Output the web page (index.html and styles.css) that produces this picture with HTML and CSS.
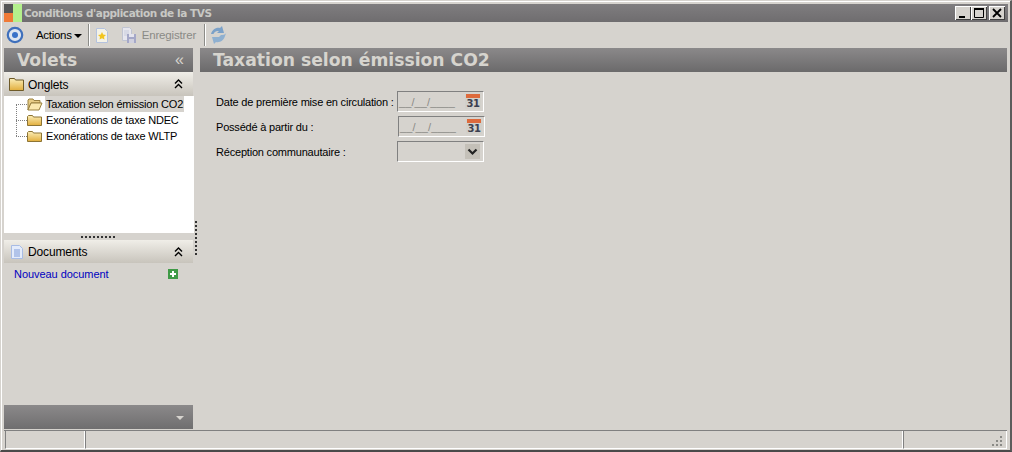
FILE: index.html
```html
<!DOCTYPE html>
<html lang="fr">
<head>
<meta charset="utf-8">
<title>Conditions d'application de la TVS</title>
<link rel="stylesheet" href="styles.css">
</head>
<body>
<svg class="defs" width="0" height="0">
  <defs>
    <linearGradient id="fold" x1="0" y1="0" x2="0" y2="1"><stop offset="0" stop-color="#fbeeb8"/><stop offset="1" stop-color="#e2ae3c"/></linearGradient>
  </defs>
</svg>
<div class="window">
  <header class="titlebar">
    <svg class="appicon" width="18" height="18" viewBox="0 0 18 18"><rect width="9" height="9" fill="#555"/><rect y="9" width="9" height="9" fill="#f07a36"/><rect x="9" width="9" height="18" fill="#b4f08c"/></svg>
    <span class="titletext">Conditions d'application de la TVS</span>
    <div class="winbtns">
      <span class="winbtn"><svg width="16" height="14" viewBox="0 0 16 14"><rect x="4" y="10" width="6" height="2" fill="#000"/></svg></span>
      <span class="winbtn"><svg width="16" height="14" viewBox="0 0 16 14"><path d="M3.500 2.500h9v9h-9z" fill="none" stroke="#000"/><rect x="3" y="2" width="10" height="2" fill="#000"/></svg></span>
      <span class="winbtn winbtn-close"><svg width="16" height="14" viewBox="0 0 16 14"><path d="M4 3l8 8M12 3l-8 8" stroke="#000" stroke-width="1.800"/></svg></span>
    </div>
  </header>
  <nav class="toolbar">
    <svg class="tb-orb" width="18" height="18" viewBox="0 0 18 18"><circle cx="9" cy="9" r="7.200" fill="#dfe6f0" stroke="#3f70bc" stroke-width="2.200"/><circle cx="9" cy="9" r="3" fill="#3a72c8"/></svg>
    <span class="tb-actions">Actions<i class="caret"></i></span>
    <span class="tb-sep"></span>
    <svg class="tb-new" width="16" height="18" viewBox="0 0 16 18"><path d="M2.500 2.500h8l3 3v11h-11z" fill="#f4f2e6" stroke="#b4c2de"/><path d="M8 6l1.200 2.600 2.800.3-2 1.900.5 2.800L8 12.200l-2.500 1.400.5-2.800-2-1.900 2.800-.3z" fill="#f2c51e"/></svg>
    <svg class="tb-save" width="18" height="18" viewBox="0 0 18 18"><path d="M2.500 1.500h7l2 2v11h-9z" fill="#e6e6ee" stroke="#c0c4d2"/><path d="M4 5h5M4 7h5M4 9h5" stroke="#c8ccdc"/><rect x="7" y="8" width="9" height="9" fill="#a5a8c8"/><rect x="9" y="8" width="5" height="3" fill="#e4e4ee"/><rect x="9" y="13" width="5" height="4" fill="#d0d0de"/></svg>
    <span class="tb-save-label">Enregistrer</span>
    <span class="tb-sep tb-sep2"></span>
    <svg class="tb-refresh" width="18" height="20" viewBox="0 0 18 20"><path d="M2 9c1-4 5-7 9-6l2-2 2 7-7 0 2-2c-3-.5-5 1-5.500 3z" fill="#7ba1c8"/><path d="M16 11c-1 4-5 7-9 6l-2 2-2-7 7 0 2-2c3 .5 5-1 5.500-3z" fill="#8fb0d0"/></svg>
  </nav>
  <div class="body">
    <aside class="sidebar">
      <div class="sb-head"><span>Volets</span><span class="sb-collapse">«</span></div>
      <div class="section-head">
        <svg width="16" height="14" viewBox="0 0 16 14"><path d="M.5 1.500h5l1 1.500h8v10.500H.5z" fill="url(#fold)" stroke="#6e5a28"/></svg>
        <span class="section-title">Onglets</span>
        <svg class="chev" width="9" height="10" viewBox="0 0 9 10"><path d="M1 4.500l3.500-3.500 3.500 3.500M1 9l3.500-3.500L8 9" fill="none" stroke="#000" stroke-width="1.400"/></svg>
      </div>
      <ul class="tree">
        <li class="tree-item">
          <svg class="folder" width="16" height="13" viewBox="0 0 16 13"><path d="M1 2l1-1h4l1 1.500h6V5H4L1 12z" fill="#e8cd85" stroke="#9a8140"/><path d="M1 12l3-7h11l-3 7z" fill="#fbe9ae" stroke="#9a8140"/></svg>
          <span class="tree-label tree-label-active">Taxation selon émission CO2</span>
        </li>
        <li class="tree-item">
          <svg class="folder" width="16" height="13" viewBox="0 0 16 13"><path d="M.5 2.500l1-1h4l1 1.500h8v8.500h-14z" fill="url(#fold)" stroke="#8d7434"/></svg>
          <span class="tree-label">Exonérations de taxe NDEC</span>
        </li>
        <li class="tree-item">
          <svg class="folder" width="16" height="13" viewBox="0 0 16 13"><path d="M.5 2.500l1-1h4l1 1.500h8v8.500h-14z" fill="url(#fold)" stroke="#8d7434"/></svg>
          <span class="tree-label">Exonérations de taxe WLTP</span>
        </li>
      </ul>
      <div class="grip"><span class="grip-dots"></span></div>
      <div class="section-head section-head-docs">
        <svg width="14" height="16" viewBox="0 0 14 16"><path d="M1.500 1.500h8l3 3v10h-11z" fill="#e4ecfb" stroke="#a8bce4"/><path d="M4 6h6M4 8h6M4 10h6M4 12h6" stroke="#7f9bd8"/></svg>
        <span class="section-title">Documents</span>
        <svg class="chev" width="9" height="10" viewBox="0 0 9 10"><path d="M1 4.500l3.500-3.500 3.500 3.500M1 9l3.500-3.500L8 9" fill="none" stroke="#000" stroke-width="1.400"/></svg>
      </div>
      <div class="docs">
        <a class="doc-link">Nouveau document</a>
        <svg width="10" height="10" viewBox="0 0 10 10"><rect width="10" height="10" fill="#3f9a46"/><path d="M5 2v6M2 5h6" stroke="#fff" stroke-width="2"/></svg>
      </div>
      <div class="sb-foot"><i class="foot-caret"></i></div>
    </aside>
    <div class="vsplit"><span class="vdots"></span></div>
    <main class="main">
      <h1 class="main-head">Taxation selon émission CO2</h1>
      <form class="form">
        <div class="row">
          <label class="row-label">Date de première mise en circulation :</label>
          <div class="field">
            <span class="mask">__/__/____</span>
            <span class="cal"><span class="cal-top"></span><b>31</b></span>
          </div>
        </div>
        <div class="row row-shift">
          <label class="row-label">Possédé à partir du :</label>
          <div class="field">
            <span class="mask">__/__/____</span>
            <span class="cal"><span class="cal-top"></span><b>31</b></span>
          </div>
        </div>
        <div class="row">
          <label class="row-label">Réception communautaire :</label>
          <div class="field">
            <span class="mask"></span>
            <span class="dropbtn"><svg width="11" height="8" viewBox="0 0 11 8"><path d="M1.500 1.500l4 4 4-4" fill="none" stroke="#222" stroke-width="2.200"/></svg></span>
          </div>
        </div>
      </form>
    </main>
  </div>
  <footer class="status">
    <span class="st st1"></span>
    <span class="st st2"></span>
    <span class="st st3"><svg class="resize" width="11" height="11" viewBox="0 0 11 11"><path d="M8 0h2v2H8zM8 4h2v2H8zM4 4h2v2H4zM8 8h2v2H8zM4 8h2v2H4zM0 8h2v2H0z" fill="#8a8a86"/></svg></span>
  </footer>
</div>
</body>
</html>
```
FILE: styles.css
```css
* { box-sizing: border-box; }
html, body { margin: 0; height: 100%; }
body {
  background: #d6d3ce;
  font-family: "Liberation Sans", Arial, sans-serif;
  font-size: 11px;
  color: #000;
  overflow: hidden;
}
.defs { position: absolute; }
.window {
  width: 1012px;
  height: 452px;
  display: flex;
  flex-direction: column;
  padding: 3px 3px 0 3px;
  background: #d6d3ce;
  border-top: 1px solid #d6d3ce;
  border-left: 1px solid #d6d3ce;
  border-right: 2px solid #5c5c5c;
  border-bottom: 2px solid #4a4a4a;
  box-shadow: inset 1px 1px 0 #fff;
}
.titlebar {
  height: 18px;
  flex: none;
  display: flex;
  align-items: center;
  margin-right: -1px;
  background: linear-gradient(#7f7d7f, #6f6d6f);
}
.appicon { flex: none; }
.titletext {
  margin-left: 2px;
  font-family: "DejaVu Sans", sans-serif;
  font-size: 10.500px;
  font-weight: 700;
  color: #c8c8c4;
  letter-spacing: -.44px;
  white-space: nowrap;
}
.winbtns { margin-left: auto; display: flex; padding-right: 3px; }
.winbtn {
  width: 16px;
  height: 14px;
  background: #d6d3ce;
  box-shadow: inset 1px 1px 0 #fff, inset -1px -1px 0 #404040;
  display: block;
}
.winbtn svg { display: block; }
.winbtn-close { margin-left: 2px; }
.toolbar {
  height: 26px;
  flex: none;
  display: flex;
  align-items: center;
  padding-left: 2px;
}
.tb-orb { flex: none; }
.tb-actions {
  margin-left: 12px;
  display: flex;
  align-items: center;
  font-size: 11.500px;
  letter-spacing: -.3px;
}
.caret {
  width: 0;
  height: 0;
  margin-left: 2px;
  margin-top: 1px;
  border-left: 4px solid transparent;
  border-right: 4px solid transparent;
  border-top: 4px solid #000;
}
.tb-sep {
  width: 2px;
  height: 22px;
  margin-left: 6px;
  border-left: 1px solid #8c8c88;
  border-right: 1px solid #fff;
}
.tb-new { margin-left: 4px; flex: none; }
.tb-save { margin-left: 10px; flex: none; }
.tb-save-label { margin-left: 4px; color: #8a8a86; font-size: 11.500px; letter-spacing: -.15px; }
.tb-sep2 { margin-left: 8px; }
.tb-refresh { margin-left: 3px; flex: none; }
.body { flex: 1; display: flex; min-height: 0; }
.sidebar { width: 189px; flex: none; display: flex; flex-direction: column; }
.sb-head, .main-head {
  height: 24px;
  flex: none;
  background: linear-gradient(#8b898a, #6b6a6b);
  color: #d6d4ce;
  font-family: "DejaVu Sans", sans-serif;
  font-weight: 700;
  font-size: 17.200px;
  line-height: 24px;
}
.sb-head { display: flex; justify-content: space-between; padding: 0 9px 0 13px; }
.sb-collapse { font-size: 16px; font-weight: 400; font-family: "Liberation Sans", sans-serif; }
.section-head {
  height: 24px;
  flex: none;
  display: flex;
  align-items: center;
  padding: 0 10px 0 5px;
  background: linear-gradient(#f0eee8, #c8c4bc);
}
.section-head-docs { height: 23px; padding-left: 6px; }
.section-title { margin-left: 3px; padding-top: 1px; font-size: 12px; flex: 1; letter-spacing: -.15px; }
.section-head-docs .section-title { margin-left: 4px; padding-top: 0; }
.tree {
  list-style: none;
  margin: 0;
  padding: 0 0 0 1px;
  height: 137px;
  flex: none;
  background: #fff;
  position: relative;
  width: 190px;
}
.tree::before {
  content: "";
  position: absolute;
  left: 12px;
  top: 8px;
  width: 7px;
  height: 32px;
  border-left: 1px dotted #808080;
}
.tree-item {
  height: 16px;
  display: flex;
  align-items: center;
  padding-left: 22px;
  position: relative;
}
.tree-item::before {
  content: "";
  position: absolute;
  left: 11px;
  top: 8px;
  width: 11px;
  border-top: 1px dotted #808080;
}
.folder { flex: none; }
.tree-label { margin-left: 2px; padding: 0 1px; line-height: 16px; font-size: 11px; letter-spacing: -.2px; white-space: nowrap; }
.tree-label-active { background: #d6d3ce; }
.grip { height: 7px; flex: none; display: flex; justify-content: center; align-items: center; background: #d6d3ce; }
.grip-dots { width: 35px; height: 2px; background: repeating-linear-gradient(90deg, #333 0 2px, transparent 2px 4px); }
.docs { flex: 1; display: flex; align-items: flex-start; padding: 5px 15px 0 10px; justify-content: space-between; }
.docs svg { margin-top: 1px; }
.doc-link { color: #0000c0; font-size: 11px; letter-spacing: -.05px; }
.sb-foot {
  height: 24px;
  flex: none;
  background: linear-gradient(#8b898a, #6f6e6f);
  display: flex;
  justify-content: flex-end;
  align-items: center;
  padding: 2px 9px 0 0;
}
.foot-caret { width: 0; height: 0; border-left: 4px solid transparent; border-right: 4px solid transparent; border-top: 4px solid #d6d3ce; }
.vsplit { width: 7px; flex: none; position: relative; }
.vdots {
  position: absolute;
  left: 2px;
  top: 173px;
  width: 2px;
  height: 35px;
  background: repeating-linear-gradient(#333 0 2px, transparent 2px 4px);
}
.main { flex: 1; min-width: 0; }
.main-head { margin: 0; padding-left: 13px; }
.form { padding: 17px 0 0 16px; display: flex; flex-direction: column; }
.row { height: 25px; display: flex; align-items: center; }
.row-shift .field { margin-left: 1px; }
.row-label { width: 181px; font-size: 11px; white-space: nowrap; letter-spacing: -.2px; }
.field {
  width: 87px;
  height: 21px;
  display: flex;
  align-items: center;
  justify-content: space-between;
  border: 1px solid;
  border-color: #808080 #fff #fff #808080;
  padding: 0 2px 0 1px;
}
.mask { color: #8a8a86; font-size: 11px; letter-spacing: .1px; }
.cal { width: 16px; height: 15px; background: #d2d0ca; display: block; border-radius: 1px; }
.cal-top { display: block; height: 4px; margin: 0 1px; background: #dd6a3c; }
.cal b { display: block; font-family: "DejaVu Sans", sans-serif; font-size: 10px; line-height: 11px; color: #3c4050; text-align: center; letter-spacing: -.5px; }
.dropbtn { width: 15px; height: 15px; margin-right: 1px; background: #c4c0b8; display: flex; align-items: center; justify-content: center; }
.status {
  height: 20px;
  flex: none;
  display: flex;
  margin-top: 1px;
  border-top: 1px solid #808080;
}
.st {
  display: block;
  height: 18px;
  border-left: 1px solid #808080;
  border-right: 1px solid #fff;
  border-bottom: 1px solid #fff;
  position: relative;
}
.st1 { width: 80px; margin-left: 1px; }
.st2 { flex: 1; }
.st3 { width: 104px; }
.resize { position: absolute; right: 3px; bottom: 1px; }
```
